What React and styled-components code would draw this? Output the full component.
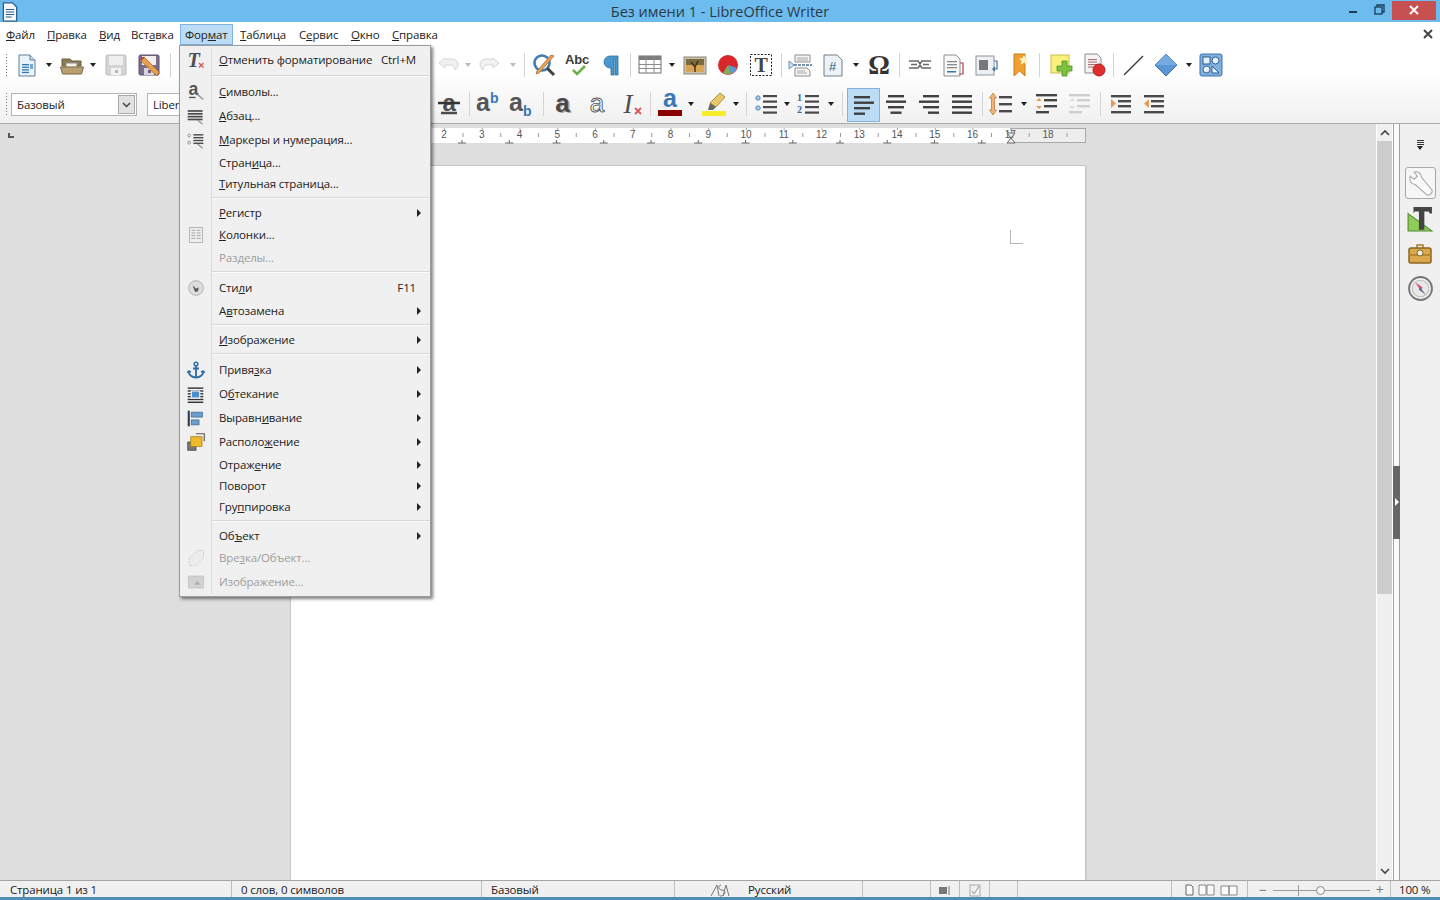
import React from "react";
import styled, { createGlobalStyle } from "styled-components";

const UI_FONT = `"Open Sans", "Noto Sans", "Liberation Sans", sans-serif`;

const GlobalStyle = createGlobalStyle`
  html, body { margin: 0; padding: 0; height: 100%; overflow: hidden; }
  body { font-family: ${UI_FONT}; color: #222; }
  #root { height: 100%; }
  u { text-underline-offset: 1px; text-decoration-thickness: 1px; }
`;

/* ---------- icons ---------- */

const Ico = ({ size = 24, children }) => (
  <svg width={size} height={size} viewBox="0 0 24 24" fill="none" overflow="visible">
    {children}
  </svg>
);

const Lines = ({ x, y, w, n, gap = 4, h = 2, color = "#4a4a4a" }) => (
  <>
    {Array.from({ length: n }).map((_, i) => (
      <rect key={i} x={x} y={y + i * gap} width={w} height={h} fill={color} />
    ))}
  </>
);

const DocIcon = () => (
  <Ico>
    <path d="M4 2h11l5 5v16H4z" fill="#eaf3fa" stroke="#5d7f9c" />
    <path d="M15 2v5h5" fill="#c9dcec" stroke="#5d7f9c" />
    <Lines x={7} y={11} w={7} n={4} gap={2.6} h={1.3} color="#2e79b5" />
    <rect x={15} y={11} width={3} height={5} fill="#7aa7cc" />
  </Ico>
);
const FolderIcon = () => (
  <Ico>
    <path d="M2 6h8l2 2h9v5H2z" fill="#8f7a57" stroke="#6b5a3e" />
    <rect x={6} y={10} width={11} height={7} fill="#f4f1e8" stroke="#8a8a8a" />
    <path d="M0.5 14h23l-2 7H2.500z" fill="#b8a070" stroke="#7a6745" />
  </Ico>
);
const SaveIcon = ({ dim }) => (
  <Ico>
    <rect x={2} y={2} width={20} height={20} rx={1.500} fill={dim ? "#d4d4d4" : "#7b6d8c"} stroke={dim ? "#bcbcbc" : "#5e4f70"} />
    <rect x={5} y={3} width={14} height={9} fill={dim ? "#efefef" : "#f5ecec"} />
    <rect x={7} y={15} width={10} height={7} fill={dim ? "#f2f2f2" : "#d8d4dc"} />
    <rect x={11} y={17} width={3} height={3} fill={dim ? "#b5b5b5" : "#6e5d80"} />
  </Ico>
);
const SaveAsIcon = () => (
  <Ico>
    <rect x={2} y={2} width={20} height={20} rx={1.500} fill="#7b6d8c" stroke="#5e4f70" />
    <rect x={5} y={3} width={14} height={9} fill="#f5ecec" />
    <rect x={7} y={15} width={10} height={7} fill="#d8d4dc" />
    <rect x={11} y={17} width={3} height={3} fill="#6e5d80" />
    <path d="M7 4l15 15-2 4L4 8z" fill="#e8a050" stroke="#b06a20" strokeWidth={0.8} />
    <path d="M4 4l4 0-4 4z" fill="#c33c3c" />
  </Ico>
);
const UndoIcon = ({ flip }) => (
  <Ico>
    <g transform={flip ? "translate(24 0) scale(-1 1)" : undefined}>
      <path d="M9 5L3 10l6 5v-3h6c3 0 4 2 4 5 2-2 3-3 3-6 0-3-3-5-7-5H9z" fill="#f1f1f1" stroke="#d6d6d6" />
    </g>
  </Ico>
);
const FindIcon = () => (
  <Ico>
    <circle cx={10} cy={10} r={7.500} fill="#fff" stroke="#3e7bb5" strokeWidth={2.600} />
    <path d="M15 15l7 7" stroke="#3f3f3f" strokeWidth={3} />
    <path d="M22 3L7 20l-3 1 1-3L19 2z" fill="#e9a35b" stroke="#a86c2a" strokeWidth={0.8} />
  </Ico>
);
const SpellIcon = () => (
  <Ico>
    <text x={12} y={11} textAnchor="middle" fontFamily="Liberation Sans" fontWeight="700" fontSize="13" fill="#3c3c3c">Abc</text>
    <path d="M8 17l4 4 8-8" stroke="#6ab04c" strokeWidth={2.500} />
  </Ico>
);
const PilcrowIcon = () => (
  <Ico>
    <path d="M19 3H11a6 6 0 000 12h1v7h3V6h1v16h3z" fill="#4a97cf" stroke="#2c6f9f" strokeWidth={0.8} />
  </Ico>
);
const TableIcon = () => (
  <Ico>
    <rect x={1} y={3} width={22} height={17} fill="#fff" stroke="#6e6e6e" />
    <rect x={1} y={3} width={22} height={4} fill="#7d7d7d" />
    <path d="M1 11.500h22M1 15.500h22M8 3v17M16 3v17" stroke="#8a8a8a" />
  </Ico>
);
const ImageIcon = () => (
  <Ico>
    <rect x={1} y={4} width={22} height={17} fill="#c9c2ae" stroke="#8c8672" />
    <rect x={3} y={6} width={18} height={13} fill="#d6a655" />
    <rect x={3} y={6} width={18} height={6} fill="#7a6a40" />
    <path d="M12 19v-6M12 14l-4-5M12 14l3-6" stroke="#3e2f16" strokeWidth={1.400} />
  </Ico>
);
const ChartIcon = () => (
  <Ico>
    <circle cx={12} cy={12} r={10} fill="#d8272a" />
    <path d="M12 12l9 3a10 10 0 01-6 6z" fill="#5b9bd0" />
    <path d="M12 12l3 9a10 10 0 01-8-1z" fill="#7db25a" />
  </Ico>
);
const TextBoxIcon = () => (
  <Ico>
    <rect x={1.500} y={1.500} width={21} height={21} fill="#fff" stroke="#222" strokeDasharray="2 1.500" />
    <text x={12} y={19} textAnchor="middle" fontFamily="Liberation Serif" fontWeight="700" fontSize="20" fill="#444">T</text>
  </Ico>
);
const BreakIcon = () => (
  <Ico>
    <path d="M6 2h15v7H6zM6 15h12l3 3v5H6z" fill="#f7f7f7" stroke="#8b8b8b" />
    <path d="M8 5h11M8 7h11M8 18h8M8 20h10" stroke="#a5a5a5" />
    <path d="M5 12h18" stroke="#4a6f8f" strokeWidth={1.500} strokeDasharray="3 1" />
    <path d="M0 8l5 4-5 4z" fill="#cfe3f3" stroke="#5e93bd" />
  </Ico>
);
const FieldIcon = () => (
  <Ico>
    <path d="M3 2h13l5 5v16H3z" fill="#eef3f7" stroke="#6f7f8c" />
    <text x={11.500} y={18} textAnchor="middle" fontFamily="Liberation Sans" fontSize="13" fill="#33587c">#</text>
  </Ico>
);
const OmegaIcon = () => (
  <Ico>
    <text x={12} y={21} textAnchor="middle" fontFamily="Liberation Serif" fontWeight="700" fontSize="27" fill="#333">Ω</text>
  </Ico>
);
const LinkIcon = () => (
  <Ico>
    <path d="M1 8h9l2 3 2-3h9M1 15h9l2-3 2 3h9M3 11.500h6M15 11.500h6" stroke="#666" strokeWidth={1.400} />
  </Ico>
);
const NoteDocIcon = () => (
  <Ico>
    <path d="M3 2h12l4 4v17H3z" fill="#f8f8f8" stroke="#8d8d8d" />
    <Lines x={6} y={8} w={10} n={3} gap={3} h={1.300} color="#8a8a8a" />
    <rect x={6} y={18} width={9} height={1.500} fill="#3577ad" />
    <path d="M19 10h3v11h-4" stroke="#b83a4a" strokeWidth={1.200} />
  </Ico>
);
const EndnoteIcon = () => (
  <Ico>
    <rect x={1} y={3} width={18} height={19} fill="#eef1f3" stroke="#8d969e" />
    <rect x={4} y={7} width={9} height={10} fill="#777" />
    <path d="M19 8h3v8h-4l2-2m-2 2l2 2" stroke="#3f6f9c" strokeWidth={1.200} />
  </Ico>
);
const BookmarkIcon = () => (
  <Ico>
    <path d="M6 1h11v22l-5.500-5L6 23z" fill="#f0a030" stroke="#cc7a1a" />
    <path d="M16 2l1.500 3 3.500.5-2.500 2.500.5 3.500-3-1.700-3 1.700.5-3.500L11 5.500l3.500-.5z" fill="#fff3c0" />
  </Ico>
);
const AddNoteIcon = () => (
  <Ico>
    <rect x={2} y={2} width={18} height={18} fill="#f9f17c" stroke="#c9bd4d" />
    <path d="M13 9h5v5h5v5h-5v5h-5v-5H8v-5h5z" transform="translate(0 -1)" fill="#7cc142" stroke="#4c9226" strokeWidth={0.8} />
  </Ico>
);
const RecordIcon = () => (
  <Ico>
    <path d="M3 1h12l4 4v15H3z" fill="#f4f4f4" stroke="#8d8d8d" />
    <Lines x={6} y={6} w={9} n={4} gap={2.500} h={1.100} color="#b07070" />
    <circle cx={17} cy={17} r={6} fill="#e02e2e" stroke="#b02020" />
  </Ico>
);
const LineIcon = () => (
  <Ico>
    <path d="M3 22L22 3" stroke="#333" strokeWidth={1.300} />
  </Ico>
);
const DiamondIcon = () => (
  <Ico>
    <path d="M12 1l11 11-11 11L1 12z" fill="#5b97d5" stroke="#3e74ad" />
    <path d="M12 1l11 11H1z" fill="#75abe2" />
  </Ico>
);
const ShapesIcon = () => (
  <Ico>
    <rect x={1} y={1} width={22} height={22} rx={2} fill="#7fb0de" stroke="#3e74ad" />
    <rect x={4} y={4} width={7} height={7} fill="#e8f1f9" stroke="#2f5f8e" />
    <circle cx={16.500} cy={7.500} r={3.500} fill="#e8f1f9" stroke="#2f5f8e" />
    <circle cx={7.500} cy={16.500} r={3.500} fill="#e8f1f9" stroke="#2f5f8e" />
    <path d="M13 20l7 0-7-7z" fill="#e8f1f9" stroke="#2f5f8e" />
  </Ico>
);

const StrikeIcon = () => (
  <Ico>
    <text x={12} y={19} textAnchor="middle" fontFamily="Liberation Sans" fontWeight="700" fontSize="24" fill="#4c4c4c">a</text>
    <path d="M1 11h22" stroke="#333" strokeWidth={2.500} />
    <path d="M4 21h16" stroke="#4c4c4c" strokeWidth={2.500} />
  </Ico>
);
const ScriptIcon = ({ sub }) => (
  <Ico>
    <text x={-1} y={19} fontFamily="Liberation Sans" fontWeight="700" fontSize="25" fill="#555">a</text>
    <text x={13} y={sub ? 24 : 11} fontFamily="Liberation Sans" fontWeight="700" fontSize="14" fill="#3a75b8">b</text>
  </Ico>
);
const ShadowAIcon = () => (
  <Ico>
    <text x={13} y={21} textAnchor="middle" fontFamily="Liberation Sans" fontWeight="700" fontSize="26" fill="#aaa">a</text>
    <text x={11.500} y={20} textAnchor="middle" fontFamily="Liberation Sans" fontWeight="700" fontSize="26" fill="#484848">a</text>
  </Ico>
);
const OutlineIcon = () => (
  <Ico>
    <text x={12} y={20} textAnchor="middle" fontFamily="Liberation Sans" fontSize="26" fill="#fff" stroke="#555" strokeWidth={0.9}>a</text>
  </Ico>
);
const ClearIcon = ({ size, glyph = "I", bold }) => (
  <Ico size={size}>
    <text x={9} y={21} textAnchor="middle" fontFamily="Liberation Serif" fontStyle="italic" fontWeight={bold ? "700" : "400"} fontSize="27" fill="#4e4e4e">{glyph}</text>
    <path d="M16 16l6 6M22 16l-6 6" stroke="#d45a5a" strokeWidth={1.800} />
  </Ico>
);
const FontColorIcon = () => (
  <Ico>
    <text x={12} y={15} textAnchor="middle" fontFamily="Liberation Sans" fontWeight="700" fontSize="25" fill="#3b78b8">a</text>
    <rect x={0} y={18} width={24} height={6} fill="#8b0000" />
  </Ico>
);
const HighlightIcon = () => (
  <Ico>
    <path d="M18 1l5 4-9 10-6-4z" fill="#e9c86a" stroke="#a98d3a" />
    <path d="M8 11l6 4-3 3H6z" fill="#666" />
    <rect x={0} y={19} width={24} height={5} fill="#f7ee2b" />
  </Ico>
);
const BulletsIcon = () => (
  <Ico>
    <circle cx={3} cy={6} r={2.200} fill="#a8c8e4" stroke="#5c8fbb" />
    <circle cx={3} cy={16} r={2.200} fill="#a8c8e4" stroke="#5c8fbb" />
    <Lines x={8} y={3} w={14} n={4} gap={5.500} h={2.200} />
  </Ico>
);
const NumberingIcon = () => (
  <Ico>
    <text x={0} y={9} fontFamily="Liberation Serif" fontWeight="700" fontSize="10" fill="#33699c">1</text>
    <text x={0} y={21} fontFamily="Liberation Serif" fontWeight="700" fontSize="10" fill="#33699c">2</text>
    <Lines x={8} y={3} w={14} n={4} gap={5.500} h={2.200} />
  </Ico>
);
const AlignIcon = ({ mode }) => {
  const rows = [16, 20, 16, 11];
  return (
    <Ico>
      {rows.map((w, i) => {
        const width = mode === "justify" ? 20 : w;
        const x = mode === "left" ? 2 : mode === "right" ? 22 - width : 12 - width / 2;
        return <rect key={i} x={x} y={3 + i * 5.500} width={width} height={2.400} fill="#3f3f3f" />;
      })}
    </Ico>
  );
};
const SpacingIcon = () => (
  <Ico>
    <path d="M4 1l3.500 5H5.500v12h2L4 23 .5 18h2V6H.5z" fill="#f2b27a" stroke="#c97a2f" strokeWidth={0.8} />
    <Lines x={10} y={4} w={13} n={3} gap={7} h={2.400} />
  </Ico>
);
const ParaSpaceIcon = ({ dim }) => {
  const c = dim ? "#cfcfcf" : "#444";
  return (
    <Ico>
      <rect x={1} y={2} width={21} height={2.400} fill={c} />
      <rect x={9} y={7} width={13} height={2.400} fill={c} />
      <rect x={9} y={13} width={13} height={2.400} fill={c} />
      <rect x={1} y={19} width={13} height={2.400} fill={c} />
      <path d="M4 6l3 3H1zM4 17l3-3H1z" fill={dim ? "#ddd" : "#e59a57"} />
    </Ico>
  );
};
const IndentIcon = ({ out }) => (
  <Ico>
    <Lines x={2} y={3} w={20} n={1} h={2.400} />
    <Lines x={9} y={8} w={13} n={2} gap={5} h={2.400} />
    <Lines x={2} y={19} w={20} n={1} h={2.400} />
    <path d={out ? "M7 7l-5 4.500L7 16z" : "M2 7l5 4.500L2 16z"} fill="#e59a57" />
  </Ico>
);

const CharIcon = () => (
  <Ico size={17}>
    <text x={9} y={16} textAnchor="middle" fontFamily="Liberation Sans" fontWeight="700" fontSize="25" fill="#555">a</text>
    <path d="M3 19h9" stroke="#555" strokeWidth={2} />
    <path d="M15 15l8 7" stroke="#999" strokeWidth={2} />
  </Ico>
);
const ParaIcon = () => (
  <Ico size={17}>
    <Lines x={1} y={3} w={21} n={4} gap={4} h={2.400} />
    <path d="M15 17l7 6" stroke="#999" strokeWidth={2} />
  </Ico>
);
const ListIcon = () => (
  <Ico size={17}>
    <circle cx={3} cy={5} r={2} stroke="#777" />
    <circle cx={3} cy={15} r={2} stroke="#777" />
    <Lines x={9} y={3} w={14} n={4} gap={4} h={2} />
    <path d="M15 17l7 6" stroke="#999" strokeWidth={2} />
  </Ico>
);
const ColumnsIcon = () => (
  <Ico size={16}>
    <rect x={2} y={1} width={20} height={22} fill="#efefef" stroke="#9a9a9a" />
    <path d="M5 5h6M5 9h6M5 13h6M5 17h6M13 5h6M13 9h6M13 13h6M13 17h6" stroke="#a8a8a8" strokeWidth={1.500} />
  </Ico>
);
const StylesIcon = () => (
  <Ico size={16}>
    <circle cx={12} cy={12} r={11} fill="#ddd" stroke="#999" />
    <path d="M7 8l5 5 4-2-1 6-4 1-2-4z" fill="#555" />
  </Ico>
);
const AnchorIcon = () => (
  <Ico size={18}>
    <circle cx={12} cy={4} r={2.500} stroke="#2f6fa8" strokeWidth={2} />
    <path d="M12 6.500V22M2 13c0 6 5 9 10 9s10-3 10-9M2 13l-1 3M2 13l3 2M22 13l1 3M22 13l-3 2M8 10h8" stroke="#2f6fa8" strokeWidth={2.500} />
  </Ico>
);
const WrapIcon = () => (
  <Ico size={17}>
    <Lines x={1} y={2} w={22} n={6} gap={4} h={2} color="#333" />
    <rect x={6} y={7} width={12} height={10} fill="#4a90d0" stroke="#fff" strokeWidth={1.500} />
  </Ico>
);
const ObjAlignIcon = () => (
  <Ico size={17}>
    <rect x={1} y={1} width={3} height={22} fill="#2d3f50" />
    <rect x={6} y={3} width={16} height={7} fill="#6f9cc8" stroke="#3d6a96" />
    <rect x={6} y={14} width={11} height={7} fill="#6f9cc8" stroke="#3d6a96" />
  </Ico>
);
const ArrangeIcon = () => (
  <Ico size={18}>
    <rect x={1} y={12} width={11} height={11} fill="#777" stroke="#444" />
    <rect x={5} y={5} width={15} height={13} fill="#f0b92a" stroke="#a27c16" />
    <path d="M12 1h11v10" stroke="#555" strokeWidth={1.500} />
  </Ico>
);
const FrameIcon = () => (
  <Ico size={18}>
    <path d="M3 12L14 2h8v10L12 22H3z" fill="#ececec" stroke="#bdbdbd" strokeDasharray="2 1.500" />
  </Ico>
);
const PictureIcon = () => (
  <Ico size={16}>
    <rect x={1} y={3} width={22} height={18} fill="#d2d2d2" stroke="#bbb" />
    <path d="M9 16l5-6 5 6z" fill="#b0b0b0" />
  </Ico>
);

const WrenchIcon = () => (
  <Ico size={25}>
    <path d="M2 5l4 3 3-3-3-4c3-1 7 1 7 5l9 11c2 2 1 4 0 5s-3 2-5 0L7 13C3 13 1 9 2 5z" fill="#fafafa" stroke="#a5a5a5" />
  </Ico>
);
const SideTextIcon = () => (
  <Ico size={26}>
    <path d="M1 7l22 16H1z" fill="#8fcc5a" stroke="#4f8a2c" />
    <path d="M6 1h17v6h-2l-1-2h-4v17h-5V5H7L6 7z" fill="#444" />
  </Ico>
);
const GalleryIcon = () => (
  <Ico size={24}>
    <path d="M9 6V3h6v3" stroke="#a57c34" strokeWidth={1.500} />
    <rect x={1} y={6} width={22} height={15} rx={2} fill="#dca84e" stroke="#8c6420" strokeWidth={1.500} />
    <rect x={1} y={12} width={22} height={2} fill="#b8862f" />
    <circle cx={12} cy={11} r={3} fill="#f4f0df" stroke="#7a6a40" />
  </Ico>
);
const CompassIcon = () => (
  <Ico size={25}>
    <circle cx={12} cy={12} r={11} fill="#f3f3f3" stroke="#777" strokeWidth={1.800} />
    <circle cx={12} cy={12} r={8} fill="#e8e8e8" stroke="#bbb" />
    <path d="M7 6l7 5-2 3z" fill="#d2506f" />
    <path d="M17 18l-7-5 2-2z" fill="#6a6f98" />
  </Ico>
);

/* ---------- window frame ---------- */

const AppFrame = styled.div`
  width: 1440px;
  height: 900px;
  display: flex;
  flex-direction: column;
  position: relative;
  overflow: hidden;
  background: #dedede;
  letter-spacing: -0.15px;
`;

const TitleBar = styled.div`
  height: 22px;
  flex: none;
  background: #6cbcef;
  display: grid;
  grid-template-columns: 1fr auto 1fr;
  align-items: center;
`;

const AppIcon = styled.div`
  display: flex;
`;

const TitleText = styled.div`
  font-size: 14.500px;
  letter-spacing: 0;
  color: #2c3a46;
  line-height: 22px;
  padding-top: 1px;
`;

const WindowButtons = styled.div`
  display: flex;
  justify-content: flex-end;
  align-items: flex-start;
  height: 22px;
  padding-right: 4px;
`;

const WinButton = styled.div`
  width: ${(p) => p.$w}px;
  height: ${(p) => (p.$close ? 19 : 18)}px;
  background: ${(p) => (p.$close ? "#c75050" : "transparent")};
  display: flex;
  align-items: center;
  justify-content: center;
`;

const TopChrome = styled.div`
  flex: none;
  box-sizing: border-box;
  height: 102px;
  background: linear-gradient(#ffffff 0%, #ffffff 50%, #f0f0f0 100%);
  border-bottom: 1px solid #a9a9a9;
  display: flex;
  flex-direction: column;
`;

const MenuBar = styled.div`
  height: 24px;
  flex: none;
  display: flex;
  align-items: stretch;
  justify-content: space-between;
  font-size: 11.500px;
`;

const MenuItems = styled.div`
  display: flex;
  padding-left: 1px;
`;

const MenuItem = styled.div`
  box-sizing: border-box;
  width: ${(p) => p.$w}px;
  margin: ${(p) => (p.$active ? "2px 0 1px" : "0")};
  display: flex;
  align-items: center;
  padding-left: ${(p) => p.$pad || 5}px;
  background: ${(p) => (p.$active ? "#bcdcf6" : "transparent")};
  box-shadow: ${(p) => (p.$active ? "inset 0 0 0 1px #7fb4e0" : "none")};
`;

const DocClose = styled.div`
  width: 24px;
  display: flex;
  align-items: center;
  justify-content: center;
`;

const ToolRow = styled.div`
  height: ${(p) => p.$h}px;
  flex: none;
  display: flex;
  align-items: center;
  padding-left: ${(p) => p.$pad}px;
`;

const Grip = styled.div`
  width: 3px;
  height: 24px;
  margin-right: 3px;
  background-image: radial-gradient(circle, #777 0.7px, transparent 0.9px);
  background-size: 3px 3px;
  flex: none;
`;

const Tool = styled.div`
  width: ${(p) => p.$w}px;
  flex: none;
  display: flex;
  align-items: center;
  justify-content: center;
`;

const ActiveTool = styled(Tool)`
  height: 34px;
  margin-top: 2px;
  box-sizing: border-box;
  background: #bcdcf6;
  border: 1px solid #7fb4e0;
`;

const Drop = styled.div`
  width: 0;
  height: 0;
  flex: none;
  border-left: 3.500px solid transparent;
  border-right: 3.500px solid transparent;
  border-top: 4px solid ${(p) => (p.$dim ? "#bdbdbd" : "#222")};
`;

const Sep = styled.div`
  width: 1px;
  height: 24px;
  background: #d4d4d4;
  flex: none;
`;

const Combo = styled.div`
  box-sizing: border-box;
  width: ${(p) => p.$w}px;
  height: 23px;
  margin-top: 2px;
  margin-right: ${(p) => p.$mr || 0}px;
  flex: none;
  background: #fff;
  border: 1px solid #b4b4b4;
  display: flex;
  align-items: center;
  justify-content: space-between;
  font-size: 11.500px;
  padding-left: 5px;
  overflow: hidden;
`;

const ComboButton = styled.div`
  width: 15px;
  height: 17px;
  margin-right: 1px;
  background: #e2e2e2;
  border: 1px solid #a8a8a8;
  display: flex;
  align-items: center;
  justify-content: center;
  flex: none;
`;

/* ---------- workspace ---------- */

const Workspace = styled.div`
  flex: 1;
  min-height: 0;
  display: flex;
`;

const DocArea = styled.div`
  width: 1376px;
  flex: none;
  display: flex;
  flex-direction: column;
  align-items: center;
  background: #dedede;
  overflow: hidden;
`;

const RulerRow = styled.div`
  width: 100%;
  height: 20px;
  margin-top: 4px;
  flex: none;
  display: grid;
  grid-template-columns: 1fr 795px 1fr;
`;

const TabCorner = styled.div`
  width: 6px;
  height: 5px;
  margin: 5px 0 0 8px;
  border-left: 2px solid #555;
  border-bottom: 2px solid #555;
  box-sizing: border-box;
`;

const Page = styled.div`
  width: 794px;
  flex: 1;
  margin-top: 18px;
  position: relative;
  background: #fff;
  box-shadow: 1px -1px 0 #c6c6c6, -1px 0 0 #c6c6c6, 2px 0 0 #cfcfcf;
`;

const MarginMark = styled.div`
  position: absolute;
  left: 719px;
  top: 64px;
  width: 12px;
  height: 13px;
  border-left: 1px solid #b5b5b5;
  border-bottom: 1px solid #b5b5b5;
`;

const ScrollBar = styled.div`
  width: 17px;
  flex: none;
  display: flex;
  flex-direction: column;
  background: #f0f0f0;
  border-left: 1px solid #fff;
  border-right: 1px solid #fff;
  box-sizing: border-box;
`;

const ScrollArrow = styled.div`
  height: 17px;
  flex: none;
  display: flex;
  align-items: center;
  justify-content: center;
`;

const ScrollThumb = styled.div`
  height: 453px;
  flex: none;
  background: #cdcdcd;
`;

const ScrollTrack = styled.div`
  flex: 1;
`;

const Splitter = styled.div`
  width: 7px;
  flex: none;
  box-sizing: border-box;
  background: #fafafa;
  border-left: 1px solid #a0a0a0;
  border-right: 1px solid #a0a0a0;
  display: flex;
  align-items: center;
  justify-content: center;
`;

const SplitterHandle = styled.div`
  width: 7px;
  height: 73px;
  flex: none;
  background: #666;
  display: flex;
  align-items: center;
  justify-content: center;
`;

const HandleArrow = styled.div`
  width: 0;
  height: 0;
  border-top: 4px solid transparent;
  border-bottom: 4px solid transparent;
  border-left: 4px solid #fff;
`;

const SideBar = styled.div`
  flex: 1;
  background: #f0f0f0;
  display: flex;
  flex-direction: column;
  align-items: center;
  padding-top: 16px;
`;

const SideMenu = styled.div`
  height: 27px;
  display: flex;
  flex-direction: column;
  align-items: center;
  gap: 1px;
`;

const SideMenuLine = styled.div`
  width: ${(p) => p.$w}px;
  height: 1px;
  background: #333;
`;

const SideButton = styled.div`
  box-sizing: border-box;
  width: 31px;
  height: ${(p) => p.$h}px;
  display: flex;
  align-items: center;
  justify-content: center;
  border-radius: 3px;
  border: 1px solid ${(p) => (p.$active ? "#a8a8a8" : "transparent")};
  background: ${(p) => (p.$active ? "#f6f6f6" : "transparent")};
`;

/* ---------- status bar ---------- */

const StatusBar = styled.div`
  height: 20px;
  flex: none;
  box-sizing: border-box;
  background: #f0f0f0;
  border-top: 1px solid #a5a5a5;
  border-bottom: 3px solid #4f8db5;
  display: flex;
  align-items: stretch;
  font-size: 11.500px;
`;

const StatusCell = styled.div`
  width: ${(p) => p.$w}px;
  flex: ${(p) => (p.$grow ? 1 : "none")};
  box-sizing: border-box;
  display: flex;
  align-items: center;
  justify-content: ${(p) => (p.$center ? "center" : "flex-start")};
  gap: ${(p) => p.$gap || 0}px;
  padding-left: ${(p) => p.$pad || 0}px;
  padding-top: 2px;
  border-right: ${(p) => (p.$last ? "none" : "1px solid #bdbdbd")};
  white-space: nowrap;
  line-height: 14px;
`;

const SliderTrack = styled.div`
  width: 97px;
  height: 1px;
  margin: 0 6px;
  background: #9a9a9a;
  position: relative;
`;

const SliderMid = styled.div`
  position: absolute;
  left: 25px;
  top: -5px;
  width: 1px;
  height: 11px;
  background: #9a9a9a;
`;

const SliderKnob = styled.div`
  position: absolute;
  left: 43px;
  top: -4px;
  width: 7px;
  height: 7px;
  border-radius: 50%;
  border: 1px solid #8a8a8a;
  background: #f4f4f4;
`;

const ZoomSign = styled.span`
  color: #777;
  font-size: 14px;
  line-height: 14px;
`;

/* ---------- format menu overlay ---------- */

const FormatMenu = styled.div`
  position: absolute;
  left: 179px;
  top: 45px;
  width: 252px;
  height: 552px;
  box-sizing: border-box;
  padding: 2px 0 3px;
  background: #f0f0f0;
  border: 1px solid #9c9c9c;
  box-shadow: 2px 2px 3px rgba(0, 0, 0, 0.5);
  font-size: 11.500px;
  display: flex;
  flex-direction: column;
  z-index: 5;
`;

const Row = styled.div`
  height: ${(p) => (p.$tall ? 24 : 21)}px;
  flex: none;
  display: flex;
  align-items: center;
  color: ${(p) => (p.$off ? "#9e9e9e" : "#222")};
`;

const RowIcon = styled.div`
  width: 31px;
  height: 100%;
  flex: none;
  display: flex;
  align-items: center;
  justify-content: center;
  border-right: 1px solid #dcdcdc;
`;

const RowLabel = styled.div`
  flex: 1;
  padding-left: 7px;
  padding-bottom: ${(p) => (p.$tall ? 2 : 0)}px;
  white-space: nowrap;
`;

const RowHint = styled.div`
  padding-right: 14px;
  padding-bottom: ${(p) => (p.$tall ? 2 : 0)}px;
  white-space: nowrap;
`;

const RowArrow = styled.div`
  width: 0;
  height: 0;
  margin-right: 9px;
  border-top: 4px solid transparent;
  border-bottom: 4px solid transparent;
  border-left: 4px solid #222;
`;

const MenuSep = styled.div`
  height: 8px;
  flex: none;
  display: flex;
`;

const MenuSepGutter = styled.div`
  width: 31px;
  flex: none;
  border-right: 1px solid #dcdcdc;
`;

const MenuSepLine = styled.div`
  flex: 1;
  height: 1px;
  margin-top: 3px;
  background: #d7d7d7;
  box-shadow: 0 1px 0 #fbfbfb;
`;

/* ---------- data ---------- */

const D = ({ w, dim }) => (
  <Tool $w={w}>
    <Drop $dim={dim} />
  </Tool>
);
const S = ({ w }) => (
  <Tool $w={w}>
    <Sep />
  </Tool>
);

const MENU_ROWS = [
  { tall: true, icon: <ClearIcon size={18} glyph="T" bold />, label: <><u>О</u>тменить форматирование</>, hint: "Ctrl+M" },
  { sep: true },
  { tall: true, icon: <CharIcon />, label: <><u>С</u>имволы...</> },
  { tall: true, icon: <ParaIcon />, label: <><u>А</u>бзац...</> },
  { tall: true, icon: <ListIcon />, label: <><u>М</u>аркеры и нумерация...</> },
  { label: <>Стран<u>и</u>ца...</> },
  { label: <><u>Т</u>итульная страница...</> },
  { sep: true },
  { label: <><u>Р</u>егистр</>, arrow: true },
  { tall: true, icon: <ColumnsIcon />, label: <><u>К</u>олонки...</> },
  { off: true, label: "Разделы..." },
  { sep: true },
  { tall: true, icon: <StylesIcon />, label: <>Сти<u>л</u>и</>, hint: "F11" },
  { label: <>А<u>в</u>тозамена</>, arrow: true },
  { sep: true },
  { label: <><u>И</u>зображение</>, arrow: true },
  { sep: true },
  { tall: true, icon: <AnchorIcon />, label: <>Привя<u>з</u>ка</>, arrow: true },
  { tall: true, icon: <WrapIcon />, label: <>О<u>б</u>текание</>, arrow: true },
  { tall: true, icon: <ObjAlignIcon />, label: <>Выравн<u>и</u>вание</>, arrow: true },
  { tall: true, icon: <ArrangeIcon />, label: <>Располо<u>ж</u>ение</>, arrow: true },
  { label: <>Отраж<u>е</u>ние</>, arrow: true },
  { label: "Поворот", arrow: true },
  { label: <>Гру<u>п</u>пировка</>, arrow: true },
  { sep: true },
  { label: <>Об<u>ъ</u>ект</>, arrow: true },
  { tall: true, off: true, icon: <FrameIcon />, label: <>Вре<u>з</u>ка/Объект...</> },
  { tall: true, off: true, icon: <PictureIcon />, label: "Изображение..." },
];

function renderRuler() {
  const nums = [];
  for (let n = 1; n <= 18; n++) {
    const x = 153 + (n - 2) * 37.75;
    nums.push(
      <text key={n} x={x} y={10} textAnchor="middle" fontSize="10" fontFamily="Liberation Sans" fill="#555">
        {n}
      </text>
    );
    nums.push(<rect key={`m${n}`} x={x + 18.500} y={5} width={1} height={4} fill="#999" />);
    nums.push(<rect key={`t${n}`} x={x} y={0} width={1} height={2} fill="#aaa" />);
  }
  const stops = [];
  for (let i = 0; i < 12; i++) {
    const x = 171 + i * 47.25;
    stops.push(
      <path key={i} d={`M${x} 12v3M${x - 4} 15h8`} stroke="#666" strokeWidth={1} />
    );
  }
  return (
    <svg width="795" height="20" viewBox="0 0 795 20">
      <rect x={39} y={0} width={681} height={15} fill="#fff" />
      <rect x={720.500} y={0.500} width={74} height={14} fill="#ededed" stroke="#a8a8a8" />
      {nums}
      {stops}
      <path d="M716 5h8l-4 5zM720 10l4 5h-8z" fill="#f4f4f4" stroke="#666" />
    </svg>
  );
}

export default function App() {
  return (
    <AppFrame>
      <GlobalStyle />
      <TitleBar>
        <AppIcon>
          <Ico size={20}>
            <path d="M4 1h11l5 5v17H4z" fill="#f4f8fb" stroke="#2b5d8a" strokeWidth={1.500} />
            <path d="M7 9h10M7 12h10M7 15h10M7 18h7" stroke="#2b5d8a" strokeWidth={1.300} />
          </Ico>
        </AppIcon>
        <TitleText>Без имени 1 - LibreOffice Writer</TitleText>
        <WindowButtons>
          <WinButton $w={26}>
            <svg width="10" height="10" viewBox="0 0 10 10">
              <rect x="1" y="6" width="8" height="2" fill="#1d3b55" />
            </svg>
          </WinButton>
          <WinButton $w={26}>
            <svg width="11" height="11" viewBox="0 0 11 11" fill="none" stroke="#1d3b55" strokeWidth="1.300">
              <rect x="1" y="3" width="7" height="7" />
              <path d="M3 3V1h7v7H8" />
            </svg>
          </WinButton>
          <WinButton $w={44} $close>
            <svg width="12" height="12" viewBox="0 0 12 12" stroke="#fff" strokeWidth="2">
              <path d="M2 2l8 8M10 2l-8 8" />
            </svg>
          </WinButton>
        </WindowButtons>
      </TitleBar>

      <TopChrome>
        <MenuBar>
          <MenuItems>
            <MenuItem $w={41}><span><u>Ф</u>айл</span></MenuItem>
            <MenuItem $w={52}><span><u>П</u>равка</span></MenuItem>
            <MenuItem $w={32}><span><u>В</u>ид</span></MenuItem>
            <MenuItem $w={54}><span>Вст<u>а</u>вка</span></MenuItem>
            <MenuItem $w={53} $active><span>Фор<u>м</u>ат</span></MenuItem>
            <MenuItem $w={61} $pad={7}><span><u>Т</u>аблица</span></MenuItem>
            <MenuItem $w={52}><span>С<u>е</u>рвис</span></MenuItem>
            <MenuItem $w={41}><span><u>О</u>кно</span></MenuItem>
            <MenuItem $w={52}><span><u>С</u>правка</span></MenuItem>
          </MenuItems>
          <DocClose>
            <svg width="10" height="10" viewBox="0 0 10 10" stroke="#444" strokeWidth="2">
              <path d="M1 1l8 8M9 1L1 9" />
            </svg>
          </DocClose>
        </MenuBar>

        <ToolRow $h={38} $pad={5}>
          <Grip />
          <Tool $w={32}><DocIcon /></Tool>
          <D w={12} />
          <Tool $w={34}><FolderIcon /></Tool>
          <D w={8} />
          <Tool $w={38}><SaveIcon dim /></Tool>
          <Tool $w={28}><SaveAsIcon /></Tool>
          <S w={14} />
          <Tool $w={257} />
          <Tool $w={28}><UndoIcon /></Tool>
          <D w={12} dim />
          <Tool $w={32}><UndoIcon flip /></Tool>
          <D w={14} dim />
          <S w={8} />
          <Tool $w={32}><FindIcon /></Tool>
          <Tool $w={34}><SpellIcon /></Tool>
          <Tool $w={34}><PilcrowIcon /></Tool>
          <S w={4} />
          <Tool $w={36}><TableIcon /></Tool>
          <D w={8} />
          <Tool $w={38}><ImageIcon /></Tool>
          <Tool $w={28}><ChartIcon /></Tool>
          <Tool $w={38}><TextBoxIcon /></Tool>
          <S w={2} />
          <Tool $w={38}><BreakIcon /></Tool>
          <Tool $w={26}><FieldIcon /></Tool>
          <D w={20} />
          <Tool $w={26}><OmegaIcon /></Tool>
          <S w={14} />
          <Tool $w={28}><LinkIcon /></Tool>
          <Tool $w={38}><NoteDocIcon /></Tool>
          <Tool $w={30}><EndnoteIcon /></Tool>
          <Tool $w={36}><BookmarkIcon /></Tool>
          <S w={2} />
          <Tool $w={42}><AddNoteIcon /></Tool>
          <Tool $w={24}><RecordIcon /></Tool>
          <S w={14} />
          <Tool $w={26}><LineIcon /></Tool>
          <Tool $w={40}><DiamondIcon /></Tool>
          <D w={6} />
          <Tool $w={38}><ShapesIcon /></Tool>
        </ToolRow>

        <ToolRow $h={39} $pad={5}>
          <Grip />
          <Combo $w={126} $mr={10}>
            <span>Базовый</span>
            <ComboButton>
              <svg width="9" height="6" viewBox="0 0 9 6" fill="none" stroke="#444" strokeWidth="1.500">
                <path d="M1 1l3.500 3.500L8 1" />
              </svg>
            </ComboButton>
          </Combo>
          <Combo $w={144}><span>Liberation Sans</span></Combo>
          <Tool $w={143} />
          <Tool $w={30}><StrikeIcon /></Tool>
          <S w={10} />
          <Tool $w={30}><ScriptIcon /></Tool>
          <Tool $w={36}><ScriptIcon sub /></Tool>
          <S w={6} />
          <Tool $w={34}><ShadowAIcon /></Tool>
          <Tool $w={34}><OutlineIcon /></Tool>
          <Tool $w={34}><ClearIcon /></Tool>
          <S w={4} />
          <Tool $w={36}><FontColorIcon /></Tool>
          <D w={6} />
          <Tool $w={40}><HighlightIcon /></Tool>
          <D w={4} />
          <S w={16} />
          <Tool $w={26}><BulletsIcon /></Tool>
          <D w={14} />
          <Tool $w={30}><NumberingIcon /></Tool>
          <D w={14} />
          <S w={8} />
          <Tool $w={1} />
          <ActiveTool $w={33}><AlignIcon mode="left" /></ActiveTool>
          <Tool $w={32}><AlignIcon mode="center" /></Tool>
          <Tool $w={34}><AlignIcon mode="right" /></Tool>
          <Tool $w={32}><AlignIcon mode="justify" /></Tool>
          <S w={8} />
          <Tool $w={30}><SpacingIcon /></Tool>
          <D w={16} />
          <Tool $w={30}><ParaSpaceIcon /></Tool>
          <Tool $w={36}><ParaSpaceIcon dim /></Tool>
          <S w={4} />
          <Tool $w={38}><IndentIcon /></Tool>
          <Tool $w={28}><IndentIcon out /></Tool>
        </ToolRow>
      </TopChrome>

      <Workspace>
        <DocArea>
          <RulerRow>
            <div><TabCorner /></div>
            {renderRuler()}
            <div />
          </RulerRow>
          <Page>
            <MarginMark />
          </Page>
        </DocArea>

        <ScrollBar>
          <ScrollArrow>
            <svg width="10" height="7" viewBox="0 0 10 7" fill="none" stroke="#444" strokeWidth="1.600">
              <path d="M1 6l4-4 4 4" />
            </svg>
          </ScrollArrow>
          <ScrollThumb />
          <ScrollTrack />
          <ScrollArrow>
            <svg width="10" height="7" viewBox="0 0 10 7" fill="none" stroke="#444" strokeWidth="1.600">
              <path d="M1 1l4 4 4-4" />
            </svg>
          </ScrollArrow>
        </ScrollBar>

        <Splitter>
          <SplitterHandle>
            <HandleArrow />
          </SplitterHandle>
        </Splitter>

        <SideBar>
          <SideMenu>
            <SideMenuLine $w={7} />
            <SideMenuLine $w={7} />
            <SideMenuLine $w={7} />
            <Drop />
          </SideMenu>
          <SideButton $active $h={32}><WrenchIcon /></SideButton>
          <SideButton $h={40}><SideTextIcon /></SideButton>
          <SideButton $h={29}><GalleryIcon /></SideButton>
          <SideButton $h={40}><CompassIcon /></SideButton>
        </SideBar>
      </Workspace>

      <StatusBar>
        <StatusCell $w={232} $pad={10}>Страница 1 из 1</StatusCell>
        <StatusCell $w={250} $pad={9}>0 слов, 0 символов</StatusCell>
        <StatusCell $w={193} $pad={9}>Базовый</StatusCell>
        <StatusCell $w={188} $pad={35} $gap={18}>
          <svg width="20" height="13" viewBox="0 0 20 13" fill="none" stroke="#777">
            <path d="M1 12L7 1l2 11M11 1c-3 0-3 5 1 5s4 6-2 6" />
            <path d="M13 12l3-11 3 11" />
          </svg>
          Русский
        </StatusCell>
        <StatusCell $w={68} />
        <StatusCell $w={29} $center>
          <svg width="14" height="11" viewBox="0 0 14 11">
            <rect x="1" y="2" width="8" height="7" fill="#777" />
            <path d="M11 1v9" stroke="#777" />
          </svg>
        </StatusCell>
        <StatusCell $w={30} $center>
          <svg width="12" height="13" viewBox="0 0 12 13" fill="none">
            <rect x="1" y="1" width="10" height="11" stroke="#aaa" />
            <path d="M3 7l2 3 5-8" stroke="#999" />
          </svg>
        </StatusCell>
        <StatusCell $w={28} />
        <StatusCell $w={154} />
        <StatusCell $w={76} $pad={12}>
          <svg width="56" height="12" viewBox="0 0 56 12" fill="#fafafa" stroke="#666">
            <path d="M2 1h5l2 2v8H2z" />
            <path d="M15 1h7v10h-7zM23 1h7v10h-7z" stroke="#888" />
            <path d="M37 2h8v9h-8zM45 2h8v9h-8z" stroke="#888" />
          </svg>
        </StatusCell>
        <StatusCell $w={143} $pad={11}>
          <ZoomSign>−</ZoomSign>
          <SliderTrack>
            <SliderMid />
            <SliderKnob />
          </SliderTrack>
          <ZoomSign>+</ZoomSign>
        </StatusCell>
        <StatusCell $grow $last $pad={8}>100 %</StatusCell>
      </StatusBar>

      <FormatMenu>
        {MENU_ROWS.map((row, i) =>
          row.sep ? (
            <MenuSep key={i}>
              <MenuSepGutter />
              <MenuSepLine />
            </MenuSep>
          ) : (
            <Row key={i} $tall={row.tall} $off={row.off}>
              <RowIcon>{row.icon}</RowIcon>
              <RowLabel $tall={row.tall}>{row.label}</RowLabel>
              {row.hint && <RowHint $tall={row.tall}>{row.hint}</RowHint>}
              {row.arrow && <RowArrow />}
            </Row>
          )
        )}
      </FormatMenu>
    </AppFrame>
  );
}
